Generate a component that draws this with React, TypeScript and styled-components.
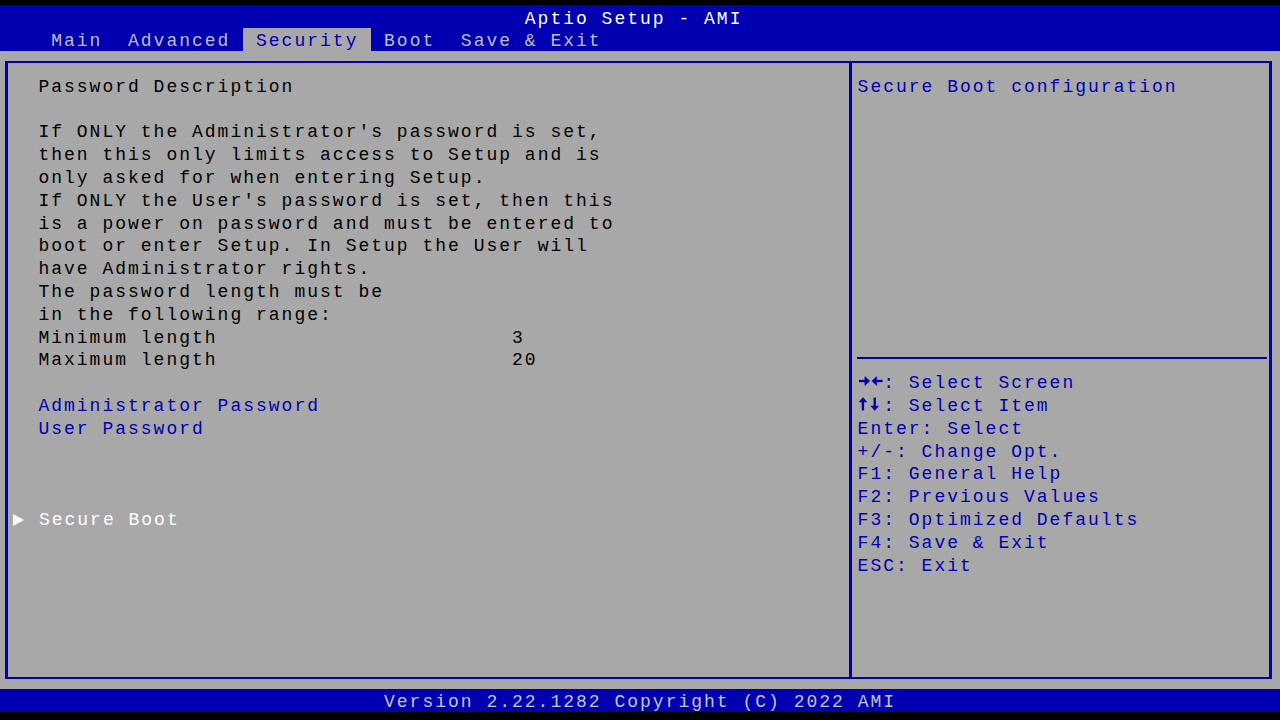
import React from "react";
import styled, { createGlobalStyle } from "styled-components";

const H = 22.8;
const CELL = 12.8;
const BLUE = "#0000b0";
const GRAY = "#a8a8a8";

const Global = createGlobalStyle`
  html, body { margin: 0; padding: 0; background: #000; }
  body { font-family: "Liberation Mono", "DejaVu Sans Mono", monospace; }
`;

const Screen = styled.div`
  width: 1280px;
  height: 720px;
  background: #000;
  padding-top: 5px;
  box-sizing: border-box;
  display: flex;
  flex-direction: column;
  overflow: hidden;
  font-family: "Liberation Mono", "DejaVu Sans Mono", monospace;
  font-size: 18px;
  letter-spacing: 2px;
  white-space: pre;
`;

const Header = styled.header`
  background: ${BLUE};
  display: flex;
  flex-direction: column;
`;

const TitleRow = styled.div`
  height: ${H}px;
  line-height: ${H}px;
  padding: 3px 0 0 ${41 * CELL}px;
  box-sizing: border-box;
  color: #ffffff;
`;

const TabRow = styled.nav`
  height: ${H}px;
  line-height: ${H}px;
  display: flex;
  padding-left: ${3 * CELL}px;
`;

const Tab = styled.span<{ $active?: boolean }>`
  padding: 2px ${CELL}px 0;
  background: ${(p) => (p.$active ? GRAY : "transparent")};
  color: ${(p) => (p.$active ? BLUE : "#bdbdc8")};
`;

const Body = styled.main`
  background: ${GRAY};
  height: ${28 * H}px;
  box-sizing: border-box;
  padding: 10.4px 8px 10.4px 5px;
  display: flex;
`;

const Box = styled.div`
  flex: 1;
  display: flex;
  border: 3px solid ${BLUE};
  border-top-width: 2px;
  border-bottom-width: 2px;
`;

const LeftPanel = styled.section`
  width: 841px;
  padding-top: 10px;
  display: flex;
  flex-direction: column;
`;

const RightPanel = styled.aside`
  flex: 1;
  border-left: 3px solid ${BLUE};
  padding-top: 10px;
  display: flex;
  flex-direction: column;
`;

type Tone = "dark" | "blue" | "white";
const toneColor: Record<Tone, string> = {
  dark: "#000000",
  blue: BLUE,
  white: "#ffffff",
};

const Line = styled.div<{ $tone?: Tone; $indent?: number }>`
  height: ${H}px;
  box-sizing: border-box;
  padding-top: 5px;
  padding-left: ${(p) => p.$indent ?? 0}px;
  color: ${(p) => toneColor[p.$tone ?? "dark"]};
  display: flex;
  align-items: center;
`;

const ValueLine = styled(Line)`
  position: relative;
`;

const Value = styled.span`
  position: absolute;
  left: ${40 * CELL - 8}px;
`;

const Triangle = styled.span`
  width: 0;
  height: 0;
  border-top: 6px solid transparent;
  border-bottom: 6px solid transparent;
  border-left: 11px solid #ffffff;
  margin-right: ${2 * CELL - 11}px;
`;

const Divider = styled.div`
  height: ${H}px;
  display: flex;
  align-items: center;
  margin: 0 2px 0 5px;
  &::after {
    content: "";
    flex: 1;
    height: 2px;
    background: ${BLUE};
  }
`;

const Spacer = styled.div<{ $rows: number }>`
  height: ${(p) => p.$rows * H}px;
`;

const KeyIcon = styled.svg`
  width: ${2 * CELL}px;
  height: 14px;
  flex: none;
  margin-top: -4px;
`;

const Footer = styled.footer`
  background: ${BLUE};
  height: ${H}px;
  line-height: ${H}px;
  padding: 2px 0 0 ${30 * CELL}px;
  box-sizing: border-box;
  color: #c4c4cc;
`;

const L = 30.4; // column 3 relative to left panel content start (x=8)
const R = 5.6; // column 67 relative to right panel content start (x=852)

const description = [
  "If ONLY the Administrator's password is set,",
  "then this only limits access to Setup and is",
  "only asked for when entering Setup.",
  "If ONLY the User's password is set, then this",
  "is a power on password and must be entered to",
  "boot or enter Setup. In Setup the User will",
  "have Administrator rights.",
  "The password length must be",
  "in the following range:",
];

function LeftRightArrows() {
  return (
    <KeyIcon viewBox="0 0 26 14" aria-hidden>
      <g fill={BLUE} stroke={BLUE}>
        <line x1="1" y1="7" x2="8" y2="7" strokeWidth="2.4" />
        <polygon points="7,2.5 12,7 7,11.5" strokeWidth="0.5" />
        <line x1="18" y1="7" x2="25" y2="7" strokeWidth="2.4" />
        <polygon points="19,2.5 14,7 19,11.5" strokeWidth="0.5" />
      </g>
    </KeyIcon>
  );
}

function UpDownArrows() {
  return (
    <KeyIcon viewBox="0 0 26 14" aria-hidden>
      <g fill={BLUE} stroke={BLUE}>
        <line x1="5" y1="4" x2="5" y2="13.5" strokeWidth="2.4" />
        <polygon points="1,5 5,0.5 9,5" strokeWidth="0.5" />
        <line x1="17" y1="0.5" x2="17" y2="10" strokeWidth="2.4" />
        <polygon points="13,9 17,13.5 21,9" strokeWidth="0.5" />
      </g>
    </KeyIcon>
  );
}

const keys: Array<[React.ReactNode, string]> = [
  [<LeftRightArrows />, ": Select Screen"],
  [<UpDownArrows />, ": Select Item"],
  [null, "Enter: Select"],
  [null, "+/-: Change Opt."],
  [null, "F1: General Help"],
  [null, "F2: Previous Values"],
  [null, "F3: Optimized Defaults"],
  [null, "F4: Save & Exit"],
  [null, "ESC: Exit"],
];

export default function App() {
  return (
    <>
      <Global />
      <Screen>
        <Header>
          <TitleRow>Aptio Setup - AMI</TitleRow>
          <TabRow>
            <Tab>Main</Tab>
            <Tab>Advanced</Tab>
            <Tab $active>Security</Tab>
            <Tab>Boot</Tab>
            <Tab>Save &amp; Exit</Tab>
          </TabRow>
        </Header>
        <Body>
          <Box>
            <LeftPanel>
              <Line $indent={L}>Password Description</Line>
              <Spacer $rows={1} />
              {description.map((t) => (
                <Line key={t} $indent={L}>
                  {t}
                </Line>
              ))}
              <ValueLine $indent={L}>
                Minimum length<Value>3</Value>
              </ValueLine>
              <ValueLine $indent={L}>
                Maximum length<Value>20</Value>
              </ValueLine>
              <Spacer $rows={1} />
              <Line $indent={L} $tone="blue">
                Administrator Password
              </Line>
              <Line $indent={L} $tone="blue">
                User Password
              </Line>
              <Spacer $rows={3} />
              <Line $indent={CELL - 8 + 0.5} $tone="white">
                <Triangle />
                Secure Boot
              </Line>
            </LeftPanel>
            <RightPanel>
              <Line $indent={R} $tone="blue">
                Secure Boot configuration
              </Line>
              <Spacer $rows={11} />
              <Divider />
              {keys.map(([k, t]) => (
                <Line key={t} $indent={R} $tone="blue">
                  {k}
                  {t}
                </Line>
              ))}
            </RightPanel>
          </Box>
        </Body>
        <Footer>Version 2.22.1282 Copyright (C) 2022 AMI</Footer>
      </Screen>
    </>
  );
}
